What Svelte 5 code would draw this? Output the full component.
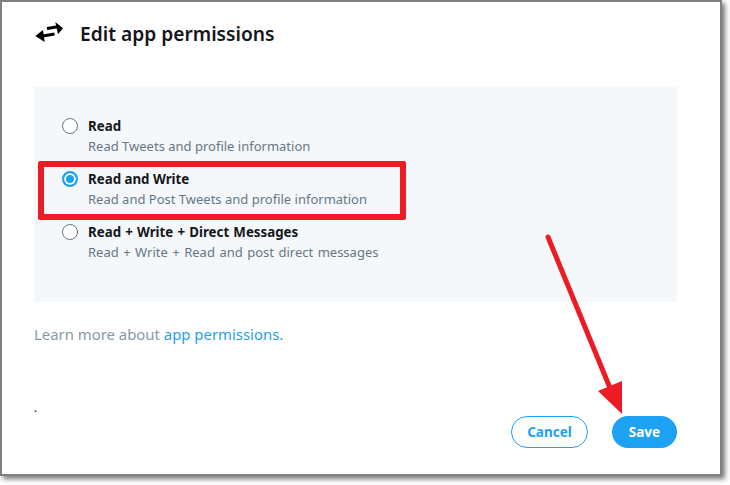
<script>
  const options = [
    { title: 'Read', desc: 'Read Tweets and profile information', checked: false, plus: false },
    { title: 'Read and Write', desc: 'Read and Post Tweets and profile information', checked: true, plus: false },
    { title: 'Read + Write + Direct Messages', desc: 'Read + Write + Read and post direct messages', checked: false, plus: true }
  ];
</script>

<div class="page">
  <div class="window">
    <header class="head">
      <svg class="icon" width="30" height="20" viewBox="0 0 30 20" aria-hidden="true">
        <path d="M13 6.5 L24 4.8" stroke="#000" stroke-width="3" fill="none" />
        <path d="M21.3 0 L29 6.3 L24 12.3 Z" fill="#000" />
        <path d="M9 14 L20.5 12" stroke="#000" stroke-width="3" fill="none" />
        <path d="M9 8 L1.3 14 L10.7 20 Z" fill="#000" />
      </svg>
      <h1>Edit app permissions</h1>
    </header>

    <section class="panel">
      {#each options as o}
        <div class="opt" class:plus={o.plus}>
          <span class="radio" class:checked={o.checked}></span>
          <div class="txt">
            <div class="title">{o.title}</div>
            <div class="desc">{o.desc}</div>
          </div>
        </div>
      {/each}
    </section>

    <p class="learn">Learn more about <a href="#top">app permissions.</a></p>

    <div class="foot">
      <span class="dot">.</span>
      <div class="btns">
        <button class="btn cancel">Cancel</button>
        <button class="btn save">Save</button>
      </div>
    </div>
  </div>

  <div class="redbox"></div>
  <svg class="arrow" width="730" height="485" viewBox="0 0 730 485" aria-hidden="true">
    <path d="M548 237 L610 388" stroke="#ed1c24" stroke-width="5" stroke-linecap="round" fill="none" />
    <path d="M598 391 L622 381 L622 414 Z" fill="#ed1c24" />
  </svg>
</div>

<style>
  :global(body) { margin: 0; background: #fff; }
  .page {
    position: relative;
    width: 730px;
    height: 485px;
    overflow: hidden;
    font-family: "Noto Sans", "Open Sans", sans-serif;
  }
  .window {
    box-sizing: border-box;
    width: 722px;
    height: 476px;
    background: #fff;
    border: 2px solid #808080;
    box-shadow: 3px 3px 5px #777;
    padding: 0 43px 0 32px;
    display: flex;
    flex-direction: column;
  }
  .head {
    display: flex;
    align-items: center;
    height: 60px;
    padding-top: 2px;
    box-sizing: border-box;
  }
  .icon { margin-right: 16px; margin-top: -2px; }
  h1 {
    margin: 0;
    font-size: 19.2px;
    font-weight: 600;
    color: #14171a;
  }
  .panel {
    margin-top: 25px;
    height: 215px;
    box-sizing: border-box;
    background: #f5f8fa;
    padding: 29px 0 0 28px;
    display: flex;
    flex-direction: column;
    gap: 13px;
  }
  .opt { display: flex; align-items: flex-start; height: 40px; }
  .opt.plus .desc { word-spacing: 1.1px; }
  .opt.plus .title { word-spacing: 0.7px; }
  .radio {
    box-sizing: border-box;
    width: 16px;
    height: 16px;
    margin-top: 2px;
    margin-right: 10px;
    border-radius: 50%;
    border: 1px solid #657786;
    background: #fff;
    flex: none;
  }
  .radio.checked {
    border: 2px solid #1da1f2;
    background: #1da1f2;
    box-shadow: inset 0 0 0 2px #fff;
  }
  .title { font-size: 13.3px; font-weight: 700; color: #14171a; line-height: 20px; }
  .desc { font-size: 13px; color: #657786; line-height: 20px; }
  .learn {
    margin: 22px 0 0;
    font-size: 14.9px;
    line-height: 20px;
    color: #8899a6;
  }
  a { color: #1da1f2; text-decoration: none; }
  .foot {
    margin-top: auto;
    margin-bottom: 26px;
    display: flex;
    justify-content: space-between;
    align-items: flex-end;
  }
  .dot { font-size: 12px; line-height: 14px; color: #14171a; margin-bottom: 33px; }
  .btns { display: flex; gap: 24px; }
  .btn {
    box-sizing: border-box;
    height: 32px;
    border-radius: 16px;
    font-family: inherit;
    font-size: 13.5px;
    font-weight: 700;
    padding: 0;
  }
  .cancel { width: 77px; background: #fff; border: 1px solid #1da1f2; color: #1da1f2; }
  .save { width: 65px; background: #1da1f2; border: 0; color: #fff; }
  .redbox {
    position: absolute;
    left: 38px;
    top: 161px;
    width: 368px;
    height: 59px;
    box-sizing: border-box;
    border: 6px solid #ed1c24;
    border-radius: 2px;
  }
  .arrow { position: absolute; left: 0; top: 0; pointer-events: none; }
</style>
